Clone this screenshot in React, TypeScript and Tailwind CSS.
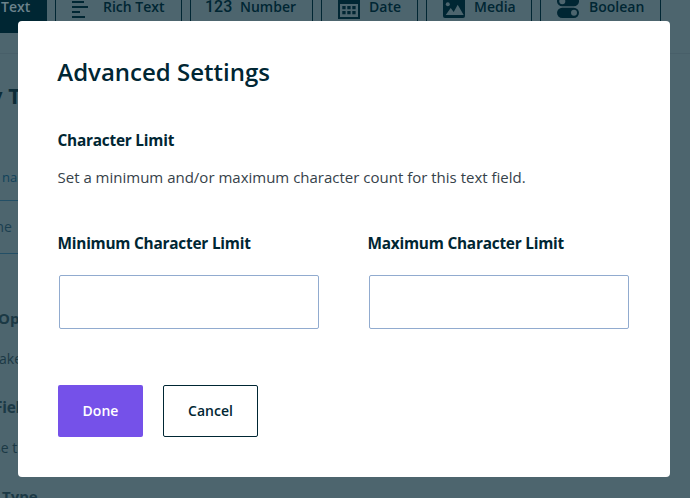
import type { ReactNode } from "react";

function TypeTab({ icon, label, className }: { icon: ReactNode; label: string; className: string }) {
  return (
    <div className={`flex h-[53px] shrink-0 items-center border border-[#002633] ${className}`}>
      {icon}
      <span className="whitespace-nowrap">{label}</span>
    </div>
  );
}

function RichTextIcon() {
  return (
    <svg className="mr-[15px] shrink-0" width="16" height="23" viewBox="0 0 16 23" fill="#002633">
      <path d="M0 1h12v2H0zM0 6h12v2H0zM0 11h16v2H0zM0 16h8v2H0zM0 21h13v2H0z" />
    </svg>
  );
}

function CalendarIcon() {
  return (
    <svg className="mr-[9px] shrink-0" width="22" height="25" viewBox="0 0 22 25">
      <path fill="#002633" fillRule="evenodd" d="M0 3h22v22H0zM2 10v13h18V10z" />
      <path
        fill="#002633"
        d="M4.3 12h3.3v3.3H4.3zM9.3 12h3.3v3.3H9.3zM14.3 12h3.3v3.3h-3.3zM4.3 17h3.3v3.3H4.3zM9.3 17h3.3v3.3H9.3zM14.3 17h3.3v3.3h-3.3z"
      />
    </svg>
  );
}

function MediaIcon() {
  return (
    <svg className="mr-[9px] shrink-0" width="22" height="23" viewBox="0 0 22 23">
      <rect y="1" width="22" height="22" rx="2" fill="#002633" />
      <circle cx="4.8" cy="9.3" r="2" fill="#4d656e" />
      <path fill="#4d656e" d="M2.7 20l5-7 3 4 4-7.3 6 10.3z" />
    </svg>
  );
}

function ToggleIcon() {
  return (
    <svg className="mr-[10px] shrink-0" width="22" height="23" viewBox="0 0 22 23">
      <rect y="1" width="22" height="10.3" rx="5.15" fill="#002633" />
      <circle cx="5.3" cy="6.2" r="3" fill="#4d656e" />
      <rect y="12.7" width="22" height="10.3" rx="5.15" fill="#002633" />
      <circle cx="17" cy="17.8" r="3" fill="#4d656e" />
    </svg>
  );
}

function LimitField({ label }: { label: string }) {
  return (
    <label className="block w-[310px] shrink-0">
      <span className="-ml-[0.5px] block text-[15.4px] font-bold leading-5 tracking-[-0.015em] [font-stretch:95%]">{label}</span>
      <input className="ml-px mt-[21px] block h-[54px] w-[260px] rounded-[2px] border border-[#91abcf] bg-white outline-none" />
    </label>
  );
}

export default function App() {
  return (
    <div className="relative h-[498px] w-[690px] overflow-hidden bg-[#4d656e] font-['Open_Sans','Noto_Sans',sans-serif] text-[#002633]">
      <header className="flow-root h-[54px] border-b border-[#485f69]">
        <div className="-mt-5 flex gap-2 text-[14px] font-semibold">
          <div className="flex h-[53px] w-[47px] shrink-0 items-center bg-[#002633] pl-px text-[#6b828b]">Text</div>
          <TypeTab icon={<RichTextIcon />} label="Rich Text" className="w-[127px] pl-4" />
          <TypeTab
            icon={<span className="mr-[9px] w-[26px] pt-px font-['Roboto',sans-serif] text-[16px] font-medium leading-5">123</span>}
            label="Number"
            className="w-[123px] pl-[14px]"
          />
          <TypeTab icon={<CalendarIcon />} label="Date" className="w-[97px] pl-4" />
          <TypeTab icon={<MediaIcon />} label="Media" className="w-[106px] pl-4" />
          <TypeTab icon={<ToggleIcon />} label="Boolean" className="w-[121px] pl-4" />
        </div>
      </header>
      <main className="w-[60px] whitespace-nowrap text-[14px] leading-5 text-[#1b3945]">
        <h1 className="-ml-[10px] mt-[26px] text-[22px] font-bold leading-[30px] text-[#0c2c38]">y Text</h1>
        <p className="ml-[2px] mt-[57px] text-[13px] text-[#10425a]">name</p>
        <div className="mt-[13px] flex h-[54px] items-center border-y border-[#234f66] text-[#1b3f50]">
          <span className="-ml-[9px]">me</span>
        </div>
        <h2 className="-ml-[2px] mt-[54px] text-[15px] font-bold [font-stretch:95%]">Options</h2>
        <p className="-ml-px mt-[21px]">ake</p>
        <h2 className="-ml-[6px] mt-[29px] text-[15.4px] font-bold tracking-[-0.016em] [font-stretch:95%]">Field</h2>
        <p className="-ml-[6px] mt-5">se this</p>
        <h2 className="ml-[2px] mt-7 text-[15px] font-bold [font-stretch:95%]">Type</h2>
      </main>

      <section role="dialog" className="absolute left-[18px] top-[21px] h-[456px] w-[652px] rounded-[4px] bg-white pl-10 pt-[34px]">
        <h1 className="-ml-[0.7px] text-[24px] font-semibold leading-[34px]">Advanced Settings</h1>
        <h2 className="-ml-[0.5px] mt-[42px] text-[15.4px] font-bold leading-5 tracking-[-0.015em] [font-stretch:95%]">Character Limit</h2>
        <p className="-ml-[0.5px] mt-4 text-[15px] leading-5 text-[#36424a]">
          Set a minimum and/or maximum character count for this text field.
        </p>
        <div className="mt-[47px] flex">
          <LimitField label="Minimum Character Limit" />
          <LimitField label="Maximum Character Limit" />
        </div>
        <div className="mt-14 flex gap-5 text-[14px] font-semibold">
          <button className="h-[52px] w-[85px] rounded-[2px] bg-[#7551e9] pb-0.5 text-white">Done</button>
          <button className="h-[52px] w-[95px] rounded-[2px] border border-[#002633] pb-0.5">Cancel</button>
        </div>
      </section>
    </div>
  );
}
